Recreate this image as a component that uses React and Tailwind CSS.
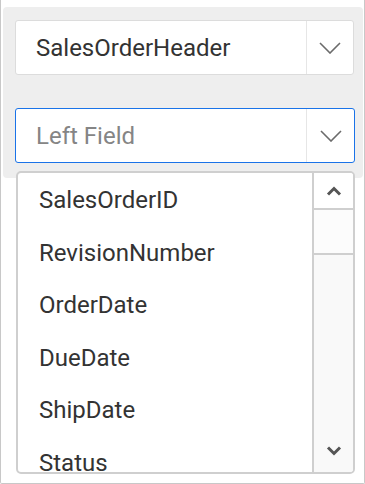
import React from "react";

const Chevron = () => (
  <svg width="22" height="12" viewBox="0 0 22 12" fill="none">
    <path d="M1 1 L11 11 L21 1" stroke="#6b6b6b" strokeWidth="1.6" />
  </svg>
);

const SmallChev = ({ up }) => (
  <svg width="16" height="10" viewBox="0 0 16 10" fill="none">
    <path d={up ? "M2 8.5 L8 2.5 L14 8.5" : "M2 1.5 L8 7.5 L14 1.5"} stroke="#555" strokeWidth="3" />
  </svg>
);

const items = ["SalesOrderID", "RevisionNumber", "OrderDate", "DueDate", "ShipDate", "Status"];

export default function App() {
  return (
    <div className="relative w-[365px] h-[484px] bg-white overflow-hidden" style={{ fontFamily: "Roboto, 'Noto Sans', sans-serif" }}>
      <div className="absolute inset-0 border border-t-0 border-[#c8c8c8] rounded-b-[2px] pointer-events-none" />
      <div className="ml-[3px] mt-[7px] w-[360px] h-[171px] bg-[#eeeeee] rounded-[4px] px-[12px] pt-[13px] flex flex-col gap-[33px]">
        <div className="h-[55px] w-[339px] bg-white border border-[#dcdcdc] rounded-[3px] flex">
          <div className="flex-1 flex items-center pl-[20px] text-[24px] text-[#333]">SalesOrderHeader</div>
          <div className="w-[47px] border-l border-[#e6e6e6] flex items-center justify-center"><Chevron /></div>
        </div>
        <div className="h-[55px] w-[340px] bg-white border border-[#1a73e8] rounded-[3px] flex">
          <div className="flex-1 flex items-center pl-[20px] text-[24px] text-[#858585]">Left Field</div>
          <div className="w-[48px] border-l border-[#e6e6e6] flex items-center justify-center"><Chevron /></div>
        </div>
      </div>
      <div className="absolute left-[16px] top-[171px] w-[339px] h-[303px] bg-white border-2 border-[#cfcfcf] rounded-[5px] flex overflow-hidden">
        <div className="flex-1 flex flex-col pl-[21px] pt-[1px]">
          {items.map((t) => (
            <div key={t} className="h-[52.5px] shrink-0 flex items-center text-[24px] text-[#333]">{t}</div>
          ))}
        </div>
        <div className="w-[41px] border-l-2 border-[#cfcfcf] bg-[#f9f9f9] flex flex-col">
          <div className="h-[37px] bg-white border-b-2 border-[#cfcfcf] flex items-center justify-center"><SmallChev up /></div>
          <div className="h-[45px] bg-[#fcfcfc] border-b-2 border-[#cfcfcf]" />
          <div className="flex-1" />
          <div className="h-[40px] flex items-center justify-center pb-[2px]"><SmallChev /></div>
        </div>
      </div>
    </div>
  );
}
